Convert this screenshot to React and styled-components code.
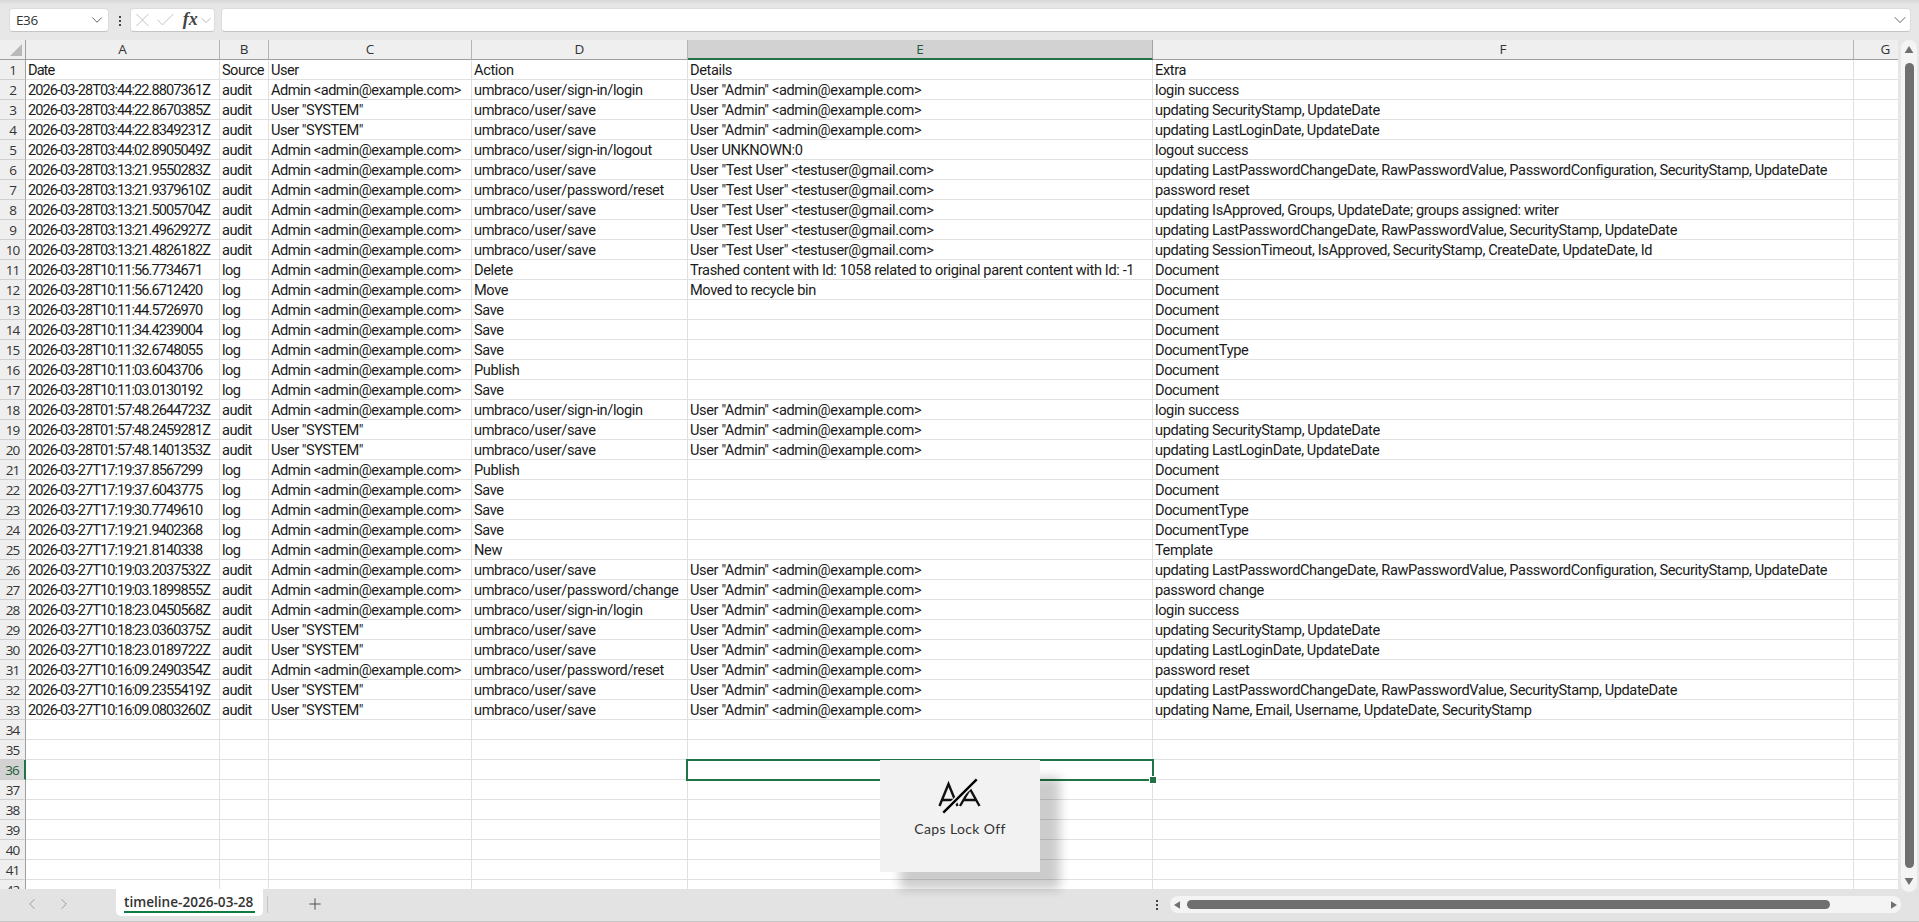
import React from 'react';
import styled, { createGlobalStyle } from 'styled-components';
import { Check, ChevronDown, ChevronLeft, ChevronRight, Plus, X } from 'lucide-react';

const ADMIN = 'Admin <admin@example.com>';
const SYSTEM = 'User "SYSTEM"';
const UA = 'User "Admin" <admin@example.com>';
const UT = 'User "Test User" <testuser@gmail.com>';
const SAVE = 'umbraco/user/save';
const STAMP = 'updating SecurityStamp, UpdateDate';
const LASTLOGIN = 'updating LastLoginDate, UpdateDate';
const FULLPW = 'updating LastPasswordChangeDate, RawPasswordValue, PasswordConfiguration, SecurityStamp, UpdateDate';
const SHORTPW = 'updating LastPasswordChangeDate, RawPasswordValue, SecurityStamp, UpdateDate';

const rows = [
  ['Date', 'Source', 'User', 'Action', 'Details', 'Extra'],
  ['2026-03-28T03:44:22.8807361Z', 'audit', ADMIN, 'umbraco/user/sign-in/login', UA, 'login success'],
  ['2026-03-28T03:44:22.8670385Z', 'audit', SYSTEM, SAVE, UA, STAMP],
  ['2026-03-28T03:44:22.8349231Z', 'audit', SYSTEM, SAVE, UA, LASTLOGIN],
  ['2026-03-28T03:44:02.8905049Z', 'audit', ADMIN, 'umbraco/user/sign-in/logout', 'User UNKNOWN:0', 'logout success'],
  ['2026-03-28T03:13:21.9550283Z', 'audit', ADMIN, SAVE, UT, FULLPW],
  ['2026-03-28T03:13:21.9379610Z', 'audit', ADMIN, 'umbraco/user/password/reset', UT, 'password reset'],
  ['2026-03-28T03:13:21.5005704Z', 'audit', ADMIN, SAVE, UT, 'updating IsApproved, Groups, UpdateDate; groups assigned: writer'],
  ['2026-03-28T03:13:21.4962927Z', 'audit', ADMIN, SAVE, UT, SHORTPW],
  ['2026-03-28T03:13:21.4826182Z', 'audit', ADMIN, SAVE, UT, 'updating SessionTimeout, IsApproved, SecurityStamp, CreateDate, UpdateDate, Id'],
  ['2026-03-28T10:11:56.7734671', 'log', ADMIN, 'Delete', 'Trashed content with Id: 1058 related to original parent content with Id: -1', 'Document'],
  ['2026-03-28T10:11:56.6712420', 'log', ADMIN, 'Move', 'Moved to recycle bin', 'Document'],
  ['2026-03-28T10:11:44.5726970', 'log', ADMIN, 'Save', '', 'Document'],
  ['2026-03-28T10:11:34.4239004', 'log', ADMIN, 'Save', '', 'Document'],
  ['2026-03-28T10:11:32.6748055', 'log', ADMIN, 'Save', '', 'DocumentType'],
  ['2026-03-28T10:11:03.6043706', 'log', ADMIN, 'Publish', '', 'Document'],
  ['2026-03-28T10:11:03.0130192', 'log', ADMIN, 'Save', '', 'Document'],
  ['2026-03-28T01:57:48.2644723Z', 'audit', ADMIN, 'umbraco/user/sign-in/login', UA, 'login success'],
  ['2026-03-28T01:57:48.2459281Z', 'audit', SYSTEM, SAVE, UA, STAMP],
  ['2026-03-28T01:57:48.1401353Z', 'audit', SYSTEM, SAVE, UA, LASTLOGIN],
  ['2026-03-27T17:19:37.8567299', 'log', ADMIN, 'Publish', '', 'Document'],
  ['2026-03-27T17:19:37.6043775', 'log', ADMIN, 'Save', '', 'Document'],
  ['2026-03-27T17:19:30.7749610', 'log', ADMIN, 'Save', '', 'DocumentType'],
  ['2026-03-27T17:19:21.9402368', 'log', ADMIN, 'Save', '', 'DocumentType'],
  ['2026-03-27T17:19:21.8140338', 'log', ADMIN, 'New', '', 'Template'],
  ['2026-03-27T10:19:03.2037532Z', 'audit', ADMIN, SAVE, UA, FULLPW],
  ['2026-03-27T10:19:03.1899855Z', 'audit', ADMIN, 'umbraco/user/password/change', UA, 'password change'],
  ['2026-03-27T10:18:23.0450568Z', 'audit', ADMIN, 'umbraco/user/sign-in/login', UA, 'login success'],
  ['2026-03-27T10:18:23.0360375Z', 'audit', SYSTEM, SAVE, UA, STAMP],
  ['2026-03-27T10:18:23.0189722Z', 'audit', SYSTEM, SAVE, UA, LASTLOGIN],
  ['2026-03-27T10:16:09.2490354Z', 'audit', ADMIN, 'umbraco/user/password/reset', UA, 'password reset'],
  ['2026-03-27T10:16:09.2355419Z', 'audit', SYSTEM, SAVE, UA, SHORTPW],
  ['2026-03-27T10:16:09.0803260Z', 'audit', SYSTEM, SAVE, UA, 'updating Name, Email, Username, UpdateDate, SecurityStamp'],
];

// letter-spacing per column: Roboto is wider than the narrow sheet font
const columns = [
  { id: 'A', tight: -0.95 },
  { id: 'B', tight: -0.55 },
  { id: 'C', tight: -0.5 },
  { id: 'D', tight: -0.38 },
  { id: 'E', tight: -0.38 },
  { id: 'F', tight: -0.39 },
  { id: 'G', tight: 0 },
];
const TEMPLATE = '26px 194px 49px 203px 216px 465px 701px 64px';
const SELECTED_ROW = 36;

const GlobalStyle = createGlobalStyle`
  html, body { margin: 0; padding: 0; background: #e6e6e6; }
  * { box-sizing: border-box; }
`;

const Page = styled.div`
  position: relative;
  width: 1919px;
  height: 922px;
  overflow: hidden;
  display: flex;
  flex-direction: column;
  background: #e6e6e6;
  font-family: Roboto, sans-serif;
  color: #1f1f1f;
`;

const FormulaBar = styled.div`
  flex: 0 0 40px;
  display: flex;
  align-items: flex-start;
  padding: 8px 8px 0 9px;
  background: linear-gradient(#d8d8d8 0, #e7e7e7 5px, #e7e7e7 100%);
`;

const Box = styled.div`
  height: 24px;
  display: flex;
  align-items: center;
  background: #fff;
  border: 1px solid #dcdcdc;
  border-bottom-color: #c4c4c4;
  border-radius: 4px;
`;

const NameBox = styled(Box)`
  width: 100px;
  padding: 0 2px 0 6px;
  justify-content: space-between;
  font-family: "Open Sans", sans-serif;
  font-size: 13.5px;
  letter-spacing: -0.4px;
  color: #333;
`;

const Dots = styled.div`
  flex: 0 0 3px;
  display: flex;
  flex-direction: column;
  gap: 2px;
  align-items: center;
  margin: ${(p) => p.$margin};
  i { width: 2px; height: 2px; background: #444; display: block; }
`;

const FxBox = styled(Box)`
  width: 85px;
  margin-left: 9px;
  overflow: hidden;
`;

const FxLabel = styled.span`
  font-family: "Liberation Serif", serif;
  font-style: italic;
  font-size: 18px;
  font-weight: 700;
  color: #444;
  width: 15px;
  margin: -2px 0 0 6px;
`;

const FormulaInput = styled(Box)`
  flex: 1;
  margin-left: 6px;
  justify-content: flex-end;
  align-items: flex-start;
  padding: 1px 0 0 0;
`;

const Middle = styled.div`
  flex: 0 0 849px;
  display: flex;
  min-height: 0;
`;

const Sheet = styled.div`
  position: relative;
  width: 1898px;
  height: 849px;
  overflow: hidden;
  background: #fff;
  font-size: 14.6px;
`;

const Row = styled.div`
  display: grid;
  grid-template-columns: ${TEMPLATE};
  height: 20px;
`;

const Cell = styled.div`
  height: 20px;
  padding-left: 2px;
  border-right: 1px solid #e0e0e0;
  border-bottom: 1px solid #e0e0e0;
  line-height: 20px;
  white-space: nowrap;
  overflow: hidden;
  letter-spacing: ${(p) => p.$tight}px;
  color: #1a1a1a;
`;

const ColHead = styled.div`
  height: 20px;
  text-align: center;
  line-height: 18px;
  font-family: "Open Sans", sans-serif;
  font-size: 13.5px;
  background: ${(p) => (p.$active ? '#d2d2d2' : '#efefef')};
  color: ${(p) => (p.$active ? '#1e5c3a' : '#333')};
  border-right: 1px solid ${(p) => (p.$active ? '#a3a3a3' : '#b4b4b4')};
  border-bottom: ${(p) => (p.$active ? '2px solid #217346' : '1px solid #9e9e9e')};
`;

const RowHead = styled.div`
  height: 20px;
  text-align: center;
  line-height: 20px;
  font-family: "Open Sans", sans-serif;
  font-size: 13.5px;
  letter-spacing: -1px;
  background: ${(p) => (p.$active ? '#d2d2d2' : '#efefef')};
  color: ${(p) => (p.$active ? '#1e5c3a' : '#333')};
  border-right: ${(p) => (p.$active ? '2px solid #217346' : '1px solid #9e9e9e')};
  border-bottom: 1px solid #cfcfcf;
`;

const Corner = styled.div`
  height: 20px;
  background: #efefef;
  border-right: 1px solid #9e9e9e;
  border-bottom: 1px solid #9e9e9e;
  display: flex;
  align-items: flex-end;
  justify-content: flex-end;
  padding: 0 3px 3px 0;
`;

const Selection = styled.div`
  position: absolute;
  left: 686px;
  top: ${(p) => p.$top}px;
  width: 468px;
  height: 22px;
  border: 2px solid #217346;
  pointer-events: none;
`;

const Handle = styled.div`
  position: absolute;
  right: -4px;
  bottom: -4px;
  width: 6px;
  height: 6px;
  background: #217346;
  border: 1px solid #fff;
  box-sizing: content-box;
  margin: -1px;
`;

const ScrollGutter = styled.div`
  flex: 1;
  position: relative;
  z-index: 2;
`;

const VTrack = styled.div`
  position: absolute;
  left: 3px;
  top: 0;
  width: 16px;
  height: 852px;
  background: #f4f4f4;
  border-radius: 8px;
  display: flex;
  flex-direction: column;
  align-items: center;
  justify-content: space-between;
  padding: 6px 0 7px;
`;

const VThumb = styled.div`
  width: 9px;
  height: 805px;
  background: #6f6f6f;
  border-radius: 5px;
`;

const Footer = styled.div`
  flex: 0 0 33px;
  display: flex;
  align-items: flex-start;
  background: #e3e3e3;
  border-bottom: 1px solid #c8c8c8;
`;

const NavArrows = styled.div`
  width: 116px;
  height: 30px;
  display: flex;
  align-items: center;
  padding-left: 23px;
  gap: 14px;
  color: #9a9a9a;
`;

const Tab = styled.div`
  width: 147px;
  height: 27px;
  padding: 3px 8px 0;
  background: #fff;
  border-radius: 0 0 5px 5px;
  font-family: "Open Sans", sans-serif;
  font-size: 13.6px;
  font-weight: 600;
  line-height: 19px;
  color: #333;
  white-space: nowrap;
`;

const TabLine = styled.div`
  height: 2px;
  background: #107c41;
`;

const TabDivider = styled.div`
  width: 1px;
  height: 17px;
  margin: 7px 0 0 4px;
  background: #c4c4c4;
`;

const AddSheet = styled.div`
  width: 94px;
  height: 30px;
  display: flex;
  align-items: center;
  justify-content: center;
  color: #444;
`;

const Spacer = styled.div`
  flex: 1;
`;

const HTrack = styled.div`
  width: 731px;
  height: 17px;
  margin: 7px 18px 0 12px;
  background: #f4f4f4;
  border-radius: 8px;
  display: flex;
  align-items: center;
  padding: 0 4px;
`;

const HThumb = styled.div`
  width: 643px;
  height: 9px;
  margin-left: 7px;
  background: #6f6f6f;
  border-radius: 5px;
`;

const Toast = styled.div`
  position: absolute;
  left: 880px;
  top: 760px;
  z-index: 3;
  width: 160px;
  height: 112px;
  padding-top: 18px;
  display: flex;
  flex-direction: column;
  align-items: center;
  background: #f2f2f2;
  box-shadow: 20px 17px 10px rgba(0, 0, 0, 0.2);
`;

const ToastLabel = styled.div`
  margin-top: 2px;
  font-family: Lato, sans-serif;
  font-size: 14px;
  letter-spacing: 0.35px;
  color: #333;
`;

function CapsIcon() {
  return (
    <svg width="44" height="40" viewBox="0 0 44 40" fill="none" stroke="#111" strokeWidth="2.4">
      <path d="M1.5 28 L10.5 6 L19.5 28 M4 22 H17" />
      <path d="M22 28 L32 11 L41.5 28 M25 22 H38" />
      <path d="M5.3 34.7 L38.7 1.3" stroke="#f2f2f2" strokeWidth="5.5" />
      <path d="M5.3 34.7 L38.7 1.3" stroke="#000" strokeWidth="2.4" />
    </svg>
  );
}

function Triangle({ dir }) {
  const d = {
    up: 'M0 8 L5 0 L10 8 Z',
    down: 'M0 0 H10 L5 8 Z',
    left: 'M8 0 V10 L0 5 Z',
    right: 'M0 0 L8 5 L0 10 Z',
  }[dir];
  const wide = dir === 'up' || dir === 'down';
  return (
    <svg width={wide ? 10 : 6} height={wide ? 7 : 10} viewBox={wide ? '0 0 10 8' : '0 0 8 10'} fill="#6f6f6f">
      <path d={d} />
    </svg>
  );
}

export default function App() {
  const rowNumbers = Array.from({ length: 42 }, (_, i) => i + 1);

  return (
    <Page>
      <GlobalStyle />
      <FormulaBar>
        <NameBox>
          E36
          <ChevronDown size={18} strokeWidth={1.1} color="#444" />
        </NameBox>
        <Dots $margin="8px 0 0 9px"><i /><i /><i /></Dots>
        <FxBox>
          <X size={24} strokeWidth={0.9} color="#b8b8b8" />
          <Check size={24} strokeWidth={0.9} color="#b8b8b8" />
          <FxLabel>fx</FxLabel>
          <ChevronDown size={17} strokeWidth={1} color="#999" />
        </FxBox>
        <FormulaInput>
          <ChevronDown size={20} strokeWidth={1} color="#444" />
        </FormulaInput>
      </FormulaBar>
      <Middle>
        <Sheet>
          <Row>
            <Corner>
              <svg width="12" height="12" viewBox="0 0 12 12"><path d="M12 0 V12 H0 Z" fill="#b9b9b9" /></svg>
            </Corner>
            {columns.map((c) => (
              <ColHead key={c.id} $active={c.id === 'E'}>{c.id}</ColHead>
            ))}
          </Row>
          {rowNumbers.map((n) => {
            const data = rows[n - 1] || [];
            return (
              <Row key={n}>
                <RowHead $active={n === SELECTED_ROW}>{n}</RowHead>
                {columns.map((c, i) => (
                  <Cell key={c.id} $tight={c.tight}>{data[i]}</Cell>
                ))}
              </Row>
            );
          })}
          <Selection $top={20 + (SELECTED_ROW - 1) * 20 - 2 + 1}>
            <Handle />
          </Selection>
        </Sheet>
        <ScrollGutter>
          <VTrack>
            <Triangle dir="up" />
            <VThumb />
            <Triangle dir="down" />
          </VTrack>
        </ScrollGutter>
      </Middle>
      <Footer>
        <NavArrows>
          <ChevronLeft size={18} strokeWidth={1.3} />
          <ChevronRight size={18} strokeWidth={1.3} />
        </NavArrows>
        <Tab>
          timeline-2026-03-28
          <TabLine />
        </Tab>
        <TabDivider />
        <AddSheet>
          <Plus size={18} strokeWidth={1.2} />
        </AddSheet>
        <Spacer />
        <Dots $margin="11px 0 0 0"><i /><i /><i /></Dots>
        <HTrack>
          <Triangle dir="left" />
          <HThumb />
          <Spacer />
          <Triangle dir="right" />
        </HTrack>
      </Footer>
      <Toast>
        <CapsIcon />
        <ToastLabel>Caps Lock Off</ToastLabel>
      </Toast>
    </Page>
  );
}
